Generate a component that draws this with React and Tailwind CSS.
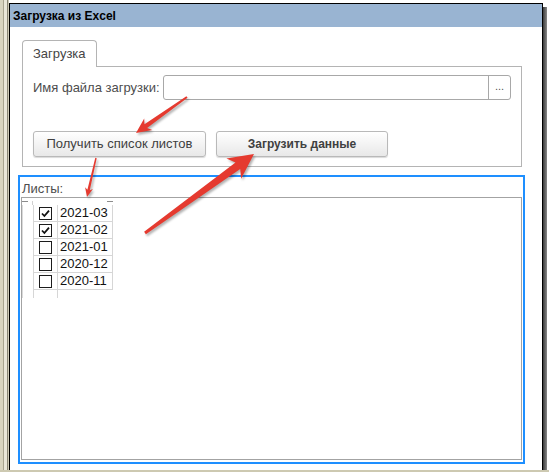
import React from "react";

// points for a tapered arrow polygon: tail -> tip
function arrowPoints(x1, y1, x2, y2, tail, shaft, headLen, headW) {
  const dx = x2 - x1;
  const dy = y2 - y1;
  const len = Math.hypot(dx, dy);
  const ux = dx / len;
  const uy = dy / len;
  const nx = -uy;
  const ny = ux;
  const bx = x2 - ux * headLen;
  const by = y2 - uy * headLen;
  const sx = x2 - ux * headLen * 0.8;
  const sy = y2 - uy * headLen * 0.8;
  const pts = [
    [x1 + (nx * tail) / 2, y1 + (ny * tail) / 2],
    [sx + (nx * shaft) / 2, sy + (ny * shaft) / 2],
    [bx + (nx * headW) / 2, by + (ny * headW) / 2],
    [x2, y2],
    [bx - (nx * headW) / 2, by - (ny * headW) / 2],
    [sx - (nx * shaft) / 2, sy - (ny * shaft) / 2],
    [x1 - (nx * tail) / 2, y1 - (ny * tail) / 2],
  ];
  return pts.map((p) => p.map((v) => v.toFixed(1)).join(",")).join(" ");
}

const arrows = [
  arrowPoints(187, 97, 136, 133, 2, 4.5, 15, 14),
  arrowPoints(96, 158, 87, 197, 1.5, 2.5, 9, 8),
  arrowPoints(145, 233, 254, 154, 3, 8, 25, 25),
];

const sheets = [
  { name: "2021-03", checked: true },
  { name: "2021-02", checked: true },
  { name: "2021-01", checked: false },
  { name: "2020-12", checked: false },
  { name: "2020-11", checked: false },
];

function CheckBox({ checked }) {
  return (
    <div className="w-[13px] h-[13px] border border-[#1c1c1c] bg-white flex items-center justify-center">
      {checked && (
        <svg width="9" height="9" viewBox="0 0 9 9">
          <path d="M1 4.5 L3.4 7 L8 1.6" fill="none" stroke="#111" strokeWidth="1.8" />
        </svg>
      )}
    </div>
  );
}

function Button({ children, bold }) {
  return (
    <button
      className={`h-[26px] rounded-[3px] border border-[#b9b9b9] bg-gradient-to-b from-white to-[#e8e8e8] shadow-[0_1px_1px_rgba(0,0,0,0.15)] text-[#404040] ${
        bold ? "w-[172px] text-[12px] font-bold" : "w-[173px] text-[13px]"
      }`}
    >
      {children}
    </button>
  );
}

export default function App() {
  return (
    <div className="relative w-[549px] h-[472px] bg-white flex flex-col overflow-hidden font-['Liberation_Sans',Arial,sans-serif]">
      <div className="flex h-[470px]">
        {/* desktop edge on the left */}
        <div className="w-[9px] flex bg-[#d8d4c0]">
          <div className="w-[3px]" />
          <div className="w-px bg-[#a7a38f]" />
          <div className="w-[3px] bg-[#e9e6d8]" />
          <div className="w-px bg-[#8a8676]" />
          <div className="w-px bg-[#cfcbb8]" />
        </div>

        {/* window */}
        <div className="w-[534px] mt-[3px] border-l border-t border-r border-black flex flex-col">
          <div className="h-[23px] bg-[#99b4d2] flex items-center pl-[3px] text-[12px] font-bold text-black">
            Загрузка из Excel
          </div>

          <div className="flex-1 bg-white pl-[12px] pr-[20px] pt-[13px] flex flex-col">
            {/* tab header */}
            <div className="relative z-10 -mb-px w-[75px] h-[27px] border border-b-0 border-[#b4b4b4] rounded-t-[4px] bg-white flex items-center pl-[10px] text-[13px] text-[#454545]">
              Загрузка
            </div>

            {/* tab page */}
            <div className="h-[101px] border border-[#b4b4b4] px-[10px] pt-[8px] flex flex-col">
              <div className="flex items-center gap-[6px]">
                <span className="w-[124px] text-[13px] text-[#4d4d4d] whitespace-nowrap">Имя файла загрузки:</span>
                <div className="flex-1 h-[25px] border border-[#a8a8a8] rounded-[3px] flex">
                  <div className="flex-1" />
                  <div className="w-[22px] border-l border-[#a8a8a8] flex items-center justify-center text-[11px] text-[#555] pb-[2px]">
                    ...
                  </div>
                </div>
              </div>
              <div className="flex gap-[10px] mt-[31px]">
                <Button>Получить список листов</Button>
                <Button bold>Загрузить данные</Button>
              </div>
            </div>

            {/* sheets group */}
            <div className="mt-[8px] -ml-[4px] -mr-[3px] h-[289px] border-2 border-[#1e8fff] flex flex-col">
              <div className="h-[20px] pl-[2px] pt-[2px] text-[13px] text-[#4d4d4d]">Листы:</div>
              <div className="flex-1 mx-px mb-[2px] border border-[#a3a3a3] pt-px">
                <div className="w-[91px]">
                  {/* grid header marks */}
                  <div className="h-[6px] flex items-start pt-[2px]">
                    <div className="w-[6px] h-px bg-[#8c8c8c]" />
                    <div className="w-[5px]" />
                    <div className="w-px h-[4px] bg-[#d0d0d0]" />
                    <div className="w-[79px]" />
                    <div className="w-[6px] h-px bg-[#8c8c8c]" />
                  </div>
                  {sheets.map((s) => (
                    <div key={s.name} className="flex h-[17px]">
                      <div className="w-[11px] border-l border-[#dadada]" />
                      <div className="w-[24px] border-l border-b border-[#d6d6d6] flex items-center justify-center">
                        <CheckBox checked={s.checked} />
                      </div>
                      <div className="w-[56px] border-l border-r border-b border-[#d6d6d6] flex items-center pl-[2px] text-[13px] text-[#111]">
                        {s.name}
                      </div>
                    </div>
                  ))}
                  <div className="flex h-[8px]">
                    <div className="w-[11px] border-l border-[#dadada]" />
                    <div className="w-[24px] border-l border-[#d6d6d6]" />
                    <div className="w-[56px] border-l border-[#d6d6d6]" />
                  </div>
                </div>
              </div>
            </div>
          </div>
        </div>

        {/* window shadow */}
        <div className="w-[4px] flex flex-col pt-[7px]">
          <div className="flex-1 bg-gradient-to-r from-[#3c3c3c] to-[#8a8a8a]" />
        </div>
      </div>
      <div className="h-[2px] bg-[#cdc9b1]" />

      {/* red callout arrows */}
      <svg className="absolute inset-0 pointer-events-none" width="549" height="472">
        <defs>
          <filter id="arrow-shadow" x="-20%" y="-20%" width="140%" height="140%">
            <feGaussianBlur stdDeviation="1.2" />
          </filter>
        </defs>
        {arrows.map((p, i) => (
          <g key={i}>
            <polygon points={p} fill="rgba(0,0,0,0.3)" transform="translate(1.5,2)" filter="url(#arrow-shadow)" />
            <polygon points={p} fill="#e53a2f" />
          </g>
        ))}
      </svg>
    </div>
  );
}
